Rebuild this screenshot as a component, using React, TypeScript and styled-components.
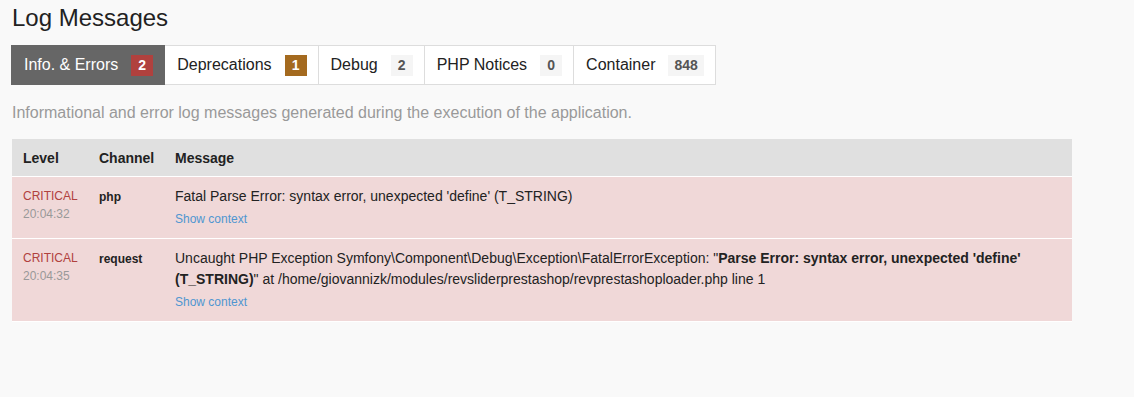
import React from "react";
import styled, { createGlobalStyle } from "styled-components";

const GlobalStyle = createGlobalStyle`
  body {
    margin: 0;
    background: #f9f9f9;
    font-family: "Liberation Sans", Arial, Helvetica, sans-serif;
    color: #222;
  }
`;

const Page = styled.div`
  padding: 3px 12px 20px;
`;

const Title = styled.h2`
  margin: 0;
  font-size: 24px;
  font-weight: normal;
  line-height: 30px;
  color: #222;
`;

const Tabs = styled.ul`
  display: flex;
  list-style: none;
  margin: 12px 0 0 -1px;
  padding: 0;
`;

const Tab = styled.li<{ $active?: boolean }>`
  display: flex;
  align-items: center;
  gap: 13px;
  height: 38px;
  padding: 0 11px 0 12px;
  font-size: 16px;
  background: ${(p) => (p.$active ? "#666" : "#fff")};
  color: ${(p) => (p.$active ? "#fff" : "#222")};
  border: 1px solid ${(p) => (p.$active ? "#666" : "#ddd")};
  border-left-width: ${(p) => (p.$active ? "1px" : "0")};
`;

const Badge = styled.span<{ $bg: string; $fg: string }>`
  box-sizing: border-box;
  display: inline-block;
  min-width: 22px;
  padding: 0 6px;
  height: 21px;
  line-height: 21px;
  font-size: 14px;
  font-weight: bold;
  text-align: center;
  background: ${(p) => p.$bg};
  color: ${(p) => p.$fg};
`;

const Help = styled.p`
  margin: 16px 0 0;
  font-size: 16px;
  line-height: 24px;
  color: #999;
`;

const Table = styled.table`
  margin-top: 14px;
  width: 1060px;
  table-layout: fixed;
  border-collapse: collapse;
  font-size: 14px;
`;

const Th = styled.th<{ $w?: number }>`
  box-sizing: border-box;
  ${(p) => (p.$w ? `width: ${p.$w}px;` : "")}
  text-align: left;
  background: #e0e0e0;
  padding: 9px 11px 8px;
  line-height: 20px;
  font-weight: bold;
  border-bottom: 1px solid #fff;
`;

const Row = styled.tr`
  background: #f0d8d8;
  border-bottom: 1px solid #fff;
`;

const Td = styled.td`
  vertical-align: top;
  padding: 9px 11px 10px;
  line-height: 21px;
`;

const Level = styled.div`
  font-size: 12px;
  line-height: 18px;
  margin-top: 1px;
  color: #b0413e;
`;

const Time = styled.div`
  font-size: 12px;
  line-height: 18px;
  color: #999;
`;

const Channel = styled.span`
  font-size: 12px;
  font-weight: bold;
  color: #222;
`;

const Context = styled.a`
  display: block;
  margin-top: 3px;
  font-size: 12px;
  line-height: 18px;
  color: #4f96d1;
  text-decoration: none;
`;

const tabs = [
  { label: "Info. & Errors", count: "2", bg: "#b0413e", fg: "#fff", active: true },
  { label: "Deprecations", count: "1", bg: "#a46a1f", fg: "#fff" },
  { label: "Debug", count: "2", bg: "#f5f5f5", fg: "#555" },
  { label: "PHP Notices", count: "0", bg: "#f5f5f5", fg: "#555" },
  { label: "Container", count: "848", bg: "#f5f5f5", fg: "#555" },
];

export default function App() {
  return (
    <>
      <GlobalStyle />
      <Page>
        <Title>Log Messages</Title>
        <Tabs>
          {tabs.map((t) => (
            <Tab key={t.label} $active={t.active}>
              {t.label}
              <Badge $bg={t.bg} $fg={t.fg}>{t.count}</Badge>
            </Tab>
          ))}
        </Tabs>
        <Help>Informational and error log messages generated during the execution of the application.</Help>
        <Table>
          <thead>
            <tr>
              <Th $w={76}>Level</Th>
              <Th $w={76}>Channel</Th>
              <Th>Message</Th>
            </tr>
          </thead>
          <tbody>
            <Row>
              <Td>
                <Level>CRITICAL</Level>
                <Time>20:04:32</Time>
              </Td>
              <Td>
                <Channel>php</Channel>
              </Td>
              <Td>
                Fatal Parse Error: syntax error, unexpected 'define' (T_STRING)
                <Context href="#">Show context</Context>
              </Td>
            </Row>
            <Row>
              <Td>
                <Level>CRITICAL</Level>
                <Time>20:04:35</Time>
              </Td>
              <Td>
                <Channel>request</Channel>
              </Td>
              <Td>
                Uncaught PHP Exception Symfony\Component\Debug\Exception\FatalErrorException: "
                <b>Parse Error: syntax error, unexpected 'define' (T_STRING)</b>" at
                /home/giovannizk/modules/revsliderprestashop/revprestashoploader.php line 1
                <Context href="#">Show context</Context>
              </Td>
            </Row>
          </tbody>
        </Table>
      </Page>
    </>
  );
}
